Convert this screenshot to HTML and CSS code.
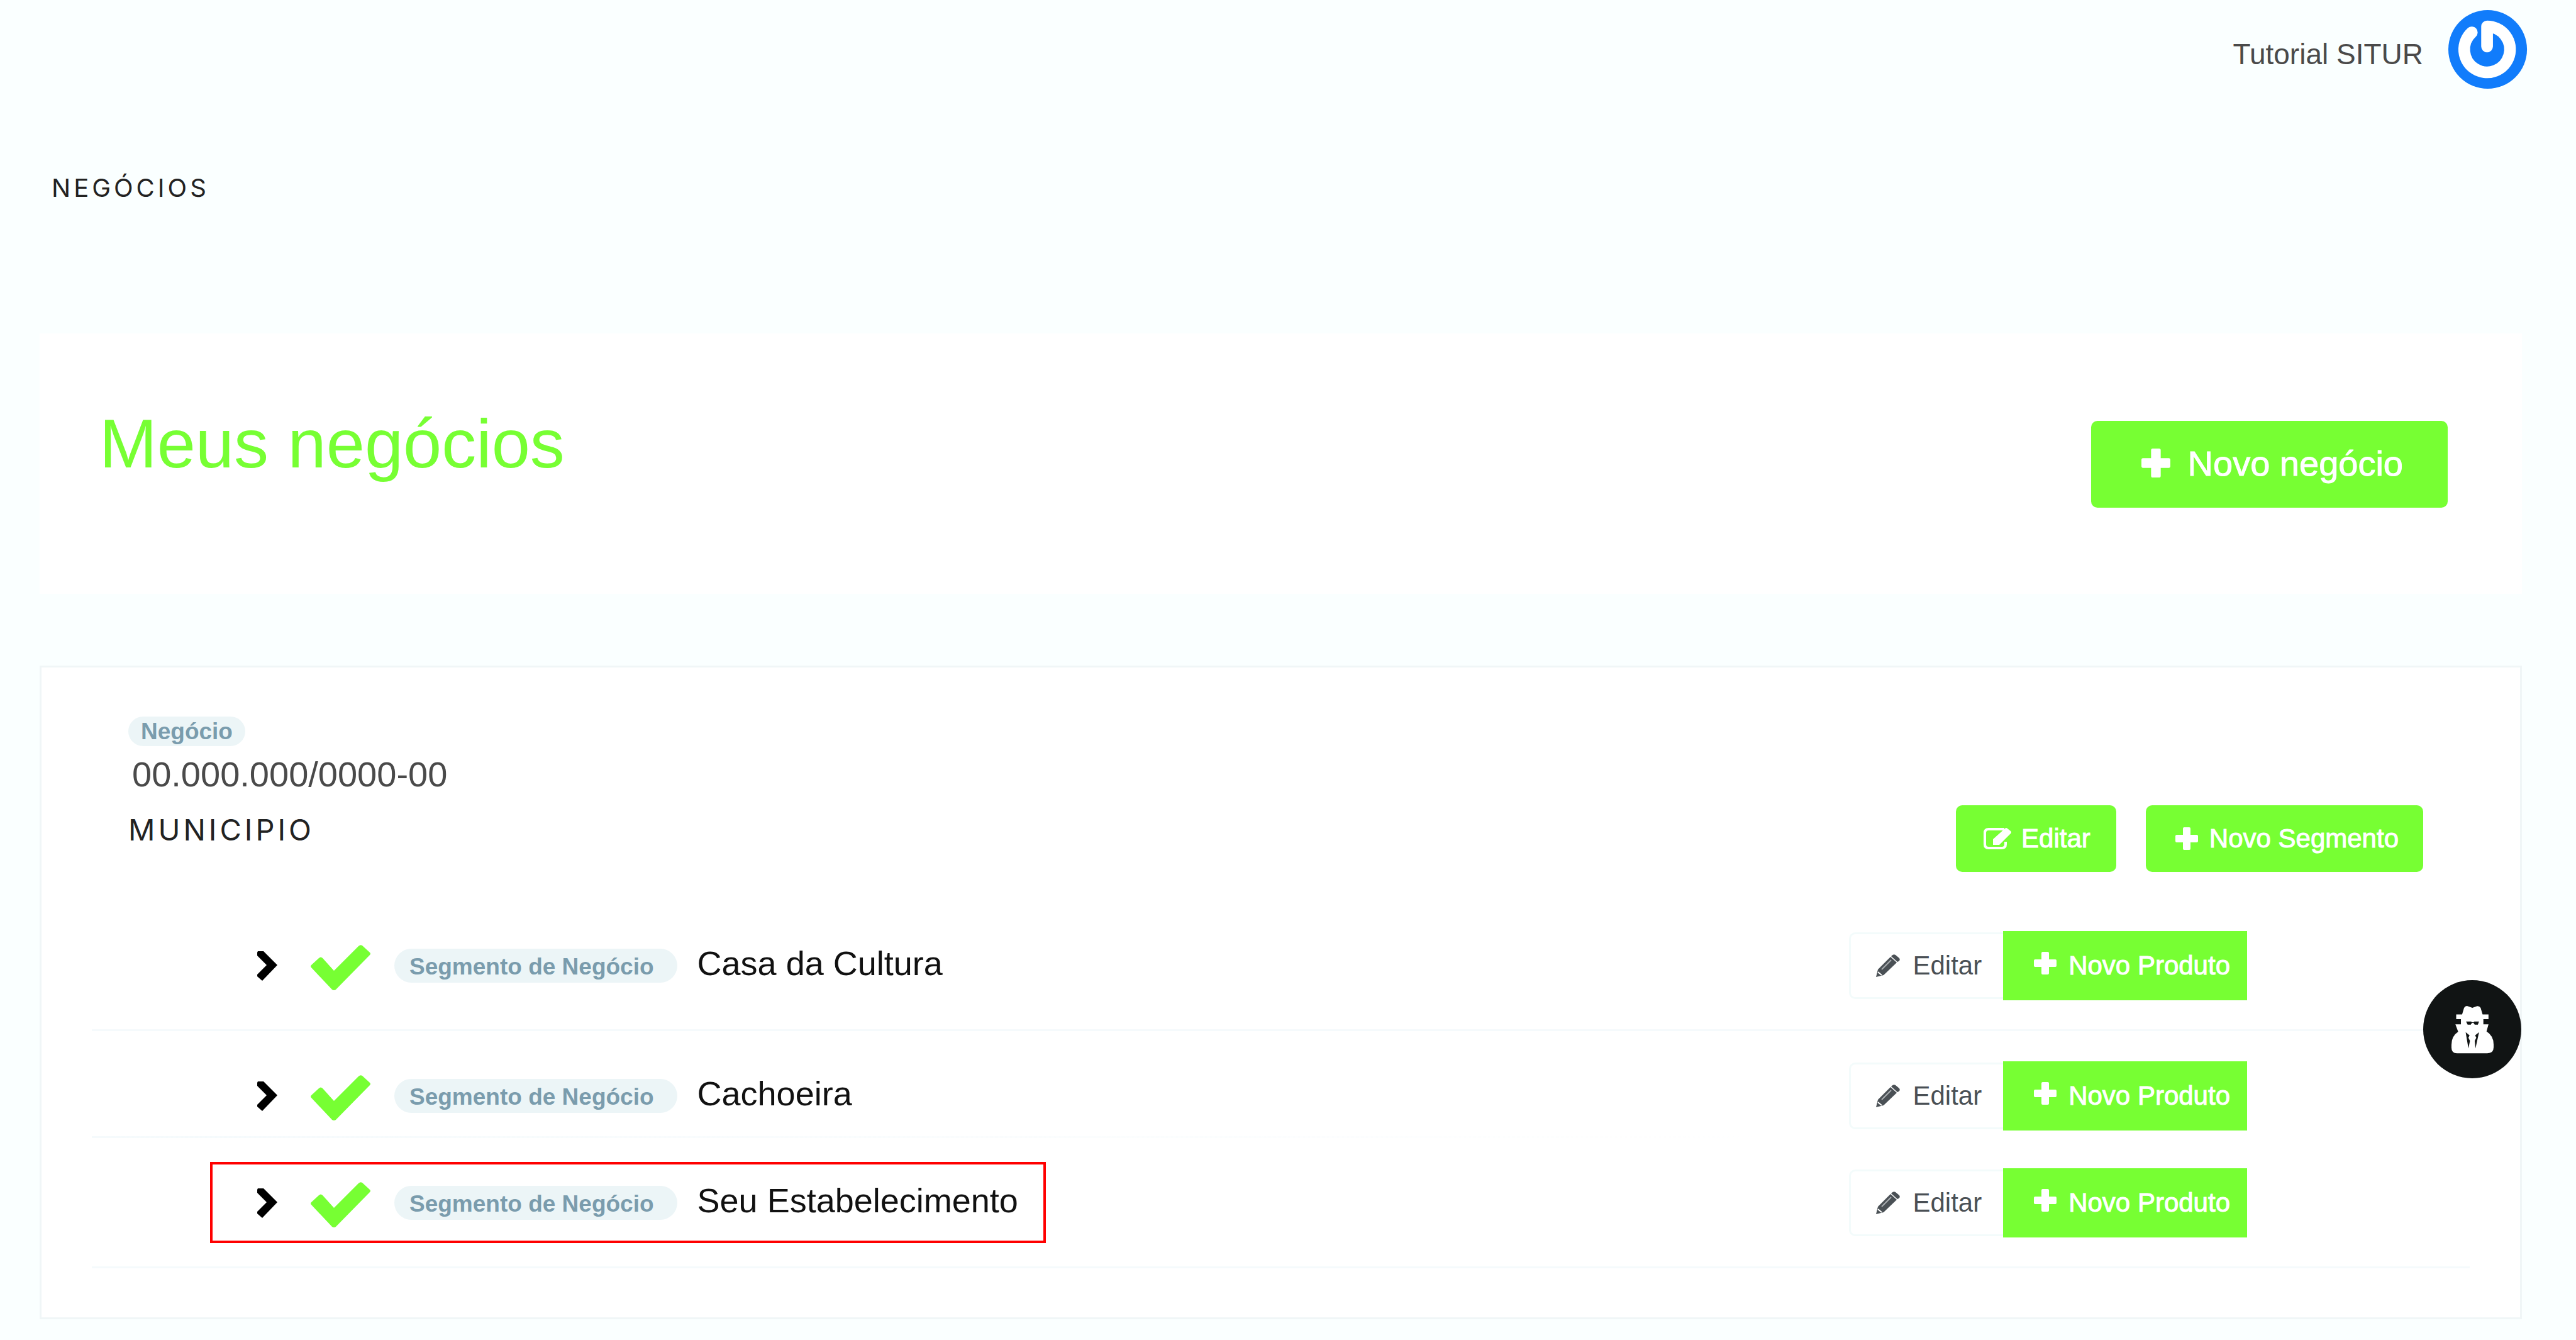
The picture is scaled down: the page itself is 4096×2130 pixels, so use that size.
FILE: index.html
```html
<!DOCTYPE html>
<html lang="pt-BR">
<head>
    <meta charset="UTF-8">
    <meta name="viewport" content="width=device-width, initial-scale=1.0">
    <title>Meus negócios</title>
    <link rel="stylesheet" href="styles.css">
</head>
<body>

    <!-- shared icons -->
    <svg class="sprite" aria-hidden="true">
        <symbol id="plus" viewBox="0 0 36 36">
            <path d="M14 0h8q2 0 2 2v10h10q2 0 2 2v8q0 2-2 2H24v10q0 2-2 2h-8q-2 0-2-2V24H2q-2 0-2-2v-8q0-2 2-2h10V2q0-2 2-2z"/>
        </symbol>
        <symbol id="edit" viewBox="0 0 46 36">
            <path fill="none" stroke="currentColor" stroke-width="4" d="M34 3H9Q3 3 3 9v18q0 6 6 6h21q6 0 6-6v-4"/>
            <path d="M16 19 35 2q2-2 4 0l5 4q2 2 0 4L26 28H16z"/>
        </symbol>
        <symbol id="pencil" viewBox="0 0 38 36">
            <path d="M0 36l3-12L23 4l10 9-21 20zM25 2q3-3 6-1l6 5q2 3-1 5l-2 1-10-9z"/>
            <path fill="none" stroke="#fff" stroke-width="2" d="M3 28l6 5"/>
            <path fill="none" stroke="#a9adb0" stroke-width="2" d="M9 24 24 9"/>
        </symbol>
        <symbol id="chevron" viewBox="0 0 33 48">
            <path d="M2 1h9l22 22L9 48 1 41v-3l15-15L1 8V3z"/>
        </symbol>
        <symbol id="check" viewBox="0 0 95 72">
            <path d="M1 36q-2-2 0-4l12-11q3-3 6 0l18 20L76 2q3-3 6-1l12 11q2 2 0 4L40 71q-3 2-6 0z"/>
        </symbol>
    </svg>

    <header class="topbar">
        <span class="user-name">Tutorial SITUR</span>
        <svg class="avatar" viewBox="0 0 135 135" aria-label="Tutorial SITUR">
            <circle cx="67" cy="67" r="67" fill="#117cfb"/>
            <path fill="none" stroke="#fff" stroke-width="20" stroke-linecap="round" stroke-linejoin="round" d="M66 62V28A39 39 0 1 1 40 38"/>
        </svg>
    </header>

    <main>
        <h2 class="page-name">NEGÓCIOS</h2>

        <section class="panel title-panel">
            <h1>Meus negócios</h1>
            <button class="btn btn-large"><svg><use href="#plus"/></svg>Novo negócio</button>
        </section>

        <section class="panel business">
            <div class="business-head">
                <div class="business-info">
                    <span class="badge">Negócio</span>
                    <p class="cnpj">00.000.000/0000-00</p>
                    <h3 class="city">MUNICIPIO</h3>
                </div>
                <div class="business-actions">
                    <button class="btn btn-edit"><svg><use href="#edit"/></svg>Editar</button>
                    <button class="btn btn-new"><svg><use href="#plus"/></svg>Novo Segmento</button>
                </div>
            </div>

            <ul class="segments">
                <li class="segment">
                    <div class="segment-info">
                        <svg class="chevron"><use href="#chevron"/></svg>
                        <svg class="check"><use href="#check"/></svg>
                        <span class="badge badge-segment">Segmento de Negócio</span>
                        <span class="segment-name">Casa da Cultura</span>
                    </div>
                    <div class="btn-group">
                        <button class="btn-light"><svg><use href="#pencil"/></svg>Editar</button>
                        <button class="btn-product"><svg><use href="#plus"/></svg>Novo Produto</button>
                    </div>
                </li>
                <li class="segment tight">
                    <div class="segment-info">
                        <svg class="chevron"><use href="#chevron"/></svg>
                        <svg class="check"><use href="#check"/></svg>
                        <span class="badge badge-segment">Segmento de Negócio</span>
                        <span class="segment-name">Cachoeira</span>
                    </div>
                    <div class="btn-group">
                        <button class="btn-light"><svg><use href="#pencil"/></svg>Editar</button>
                        <button class="btn-product"><svg><use href="#plus"/></svg>Novo Produto</button>
                    </div>
                </li>
                <li class="segment">
                    <div class="segment-info highlight">
                        <svg class="chevron"><use href="#chevron"/></svg>
                        <svg class="check"><use href="#check"/></svg>
                        <span class="badge badge-segment">Segmento de Negócio</span>
                        <span class="segment-name">Seu Estabelecimento</span>
                    </div>
                    <div class="btn-group">
                        <button class="btn-light"><svg><use href="#pencil"/></svg>Editar</button>
                        <button class="btn-product"><svg><use href="#plus"/></svg>Novo Produto</button>
                    </div>
                </li>
            </ul>
        </section>
    </main>

    <button class="spy" aria-label="Privacidade">
        <svg viewBox="0 0 214 245">
            <path fill="#fff" d="M64 12Q72 0 84 4l22 8 22-8q13-3 20 8l10 34h30v24h-26v26h26l-10 36q36 22 36 66v15q0 30-32 30H32Q0 245 0 215v-15q0-44 34-66L20 96h28V70H24V46h30z"/>
            <path fill="#111414" d="M74 82h26l4 4h8l4-4h24l-6 16h-16l-6-9h-8l-6 9H82zM72 136l20 16-6 12 8 16-8 38zM140 136l-20 16 6 12-8 16 4 38z"/>
        </svg>
    </button>

</body>
</html>
```

FILE: styles.css
```css
* {
    box-sizing: border-box;
    margin: 0;
    padding: 0;
}
body {
    background-color: #faffff;
    font-family: "Liberation Sans", Arial, sans-serif;
}
.sprite {
    position: absolute;
    width: 0;
    height: 0;
}
svg {
    fill: currentColor;
    flex-shrink: 0;
}
button {
    font-family: inherit;
    border: none;
    cursor: pointer;
    display: flex;
    align-items: center;
}

/* top bar */
.topbar {
    display: flex;
    justify-content: flex-end;
    align-items: center;
    gap: 40px;
    padding: 16px 77px 0;
}
.user-name {
    font-size: 46px;
    color: #4a4a4a;
    padding-top: 14px;
}
.avatar {
    width: 126px;
    height: 126px;
}
.page-name {
    margin: 133px 0 0 82px;
    font-family: Inter, sans-serif;
    font-size: 40px;
    font-weight: 400;
    line-height: 48px;
    letter-spacing: 5px;
    color: #222;
}

/* panels */
.panel {
    margin: 0 86px 0 63px;
    background-color: #fff;
}
.title-panel {
    display: flex;
    justify-content: space-between;
    align-items: flex-start;
    margin-top: 207px;
    padding: 115px 118px 137px 95px;
}
h1 {
    font-size: 110px;
    font-weight: 400;
    line-height: 120px;
    color: #77ff33;
}
.btn {
    height: 106px;
    background-color: #77ff33;
    color: #fff;
    font-size: 42px;
    border-radius: 10px;
    -webkit-text-stroke: 1px #fff;
}
.btn-large {
    height: 138px;
    margin-top: 24px;
    padding: 0 71px 4px 80px;
    gap: 28px;
    font-size: 56px;
}
.btn-large svg {
    width: 46px;
    height: 46px;
}
.btn-edit {
    padding: 0 41px 0 43px;
    gap: 15px;
}
.btn-edit svg {
    width: 46px;
    height: 36px;
}
.btn-new {
    padding: 0 39px 0 47px;
    gap: 18px;
}
.btn-new svg, .btn-product svg {
    width: 36px;
    height: 36px;
}

/* business */
.business {
    margin-top: 114px;
    margin-bottom: 32px;
    padding: 78px 80px;
    border: 3px solid #f0f6f7;
}
.business-head {
    display: flex;
    justify-content: space-between;
    align-items: flex-end;
    min-height: 247px;
    padding: 0 74px 0 58px;
}
.business-info {
    align-self: flex-start;
}
.badge {
    display: block;
    width: fit-content;
    padding: 0 20px;
    font-size: 37px;
    font-weight: 700;
    line-height: 47px;
    color: #7a9cad;
    background-color: #ecf5f7;
    border-radius: 28px;
}
.cnpj {
    margin-top: 13px;
    padding-left: 6px;
    font-size: 56px;
    line-height: 64px;
    color: #4a4a4a;
}
.city {
    margin-top: 28px;
    font-family: Inter, sans-serif;
    font-size: 47px;
    font-weight: 400;
    line-height: 56px;
    letter-spacing: 5px;
    color: #222;
}
.business-actions {
    display: flex;
    gap: 47px;
}

/* segments */
.segments {
    list-style: none;
    margin-top: 46px;
}
.segment {
    display: flex;
    justify-content: space-between;
    align-items: center;
    padding: 38px 354px 37px 188px;
    border-bottom: 3px solid #f5fafc;
}
.segment.tight {
    padding-bottom: 0;
    border-image: linear-gradient(to right, #f5fafc, #fff 70%) 1;
}
.segment-info {
    display: flex;
    align-items: center;
    height: 129px;
    padding: 0 40px 0 70px;
    border: 4px solid transparent;
}
.highlight {
    border-color: #ff0000;
}
.chevron {
    width: 33px;
    height: 48px;
    margin-right: 53px;
}
.check {
    width: 95px;
    height: 72px;
    margin: 6px 38px 0 0;
    color: #77ff33;
}
.badge-segment {
    padding: 3px 37px 0 24px;
    line-height: 51px;
    margin-right: 32px;
}
.segment-name {
    padding-bottom: 8px;
    font-size: 54px;
    color: #111;
}
.btn-group {
    display: flex;
    align-items: center;
}
.btn-light, .btn-product {
    font-size: 42px;
}
.btn-light {
    height: 106px;
    padding: 0 34px 0 40px;
    gap: 20px;
    color: #4a5055;
    background-color: #fff;
    border: 3px solid #f3fbfb;
    border-right: none;
    border-radius: 10px 0 0 10px;
}
.btn-light svg {
    width: 38px;
    height: 36px;
}
.btn-product {
    height: 110px;
    padding: 0 27px 0 49px;
    gap: 19px;
    color: #fff;
    background-color: #77ff33;
    -webkit-text-stroke: 1px #fff;
}
.btn-product svg {
    margin-bottom: 8px;
}

/* floating button */
.spy {
    position: absolute;
    top: 1558px;
    right: 87px;
    width: 156px;
    height: 156px;
    justify-content: center;
    background-color: #111414;
    border-radius: 50%;
}
.spy svg {
    width: 67px;
    height: 77px;
}
```
